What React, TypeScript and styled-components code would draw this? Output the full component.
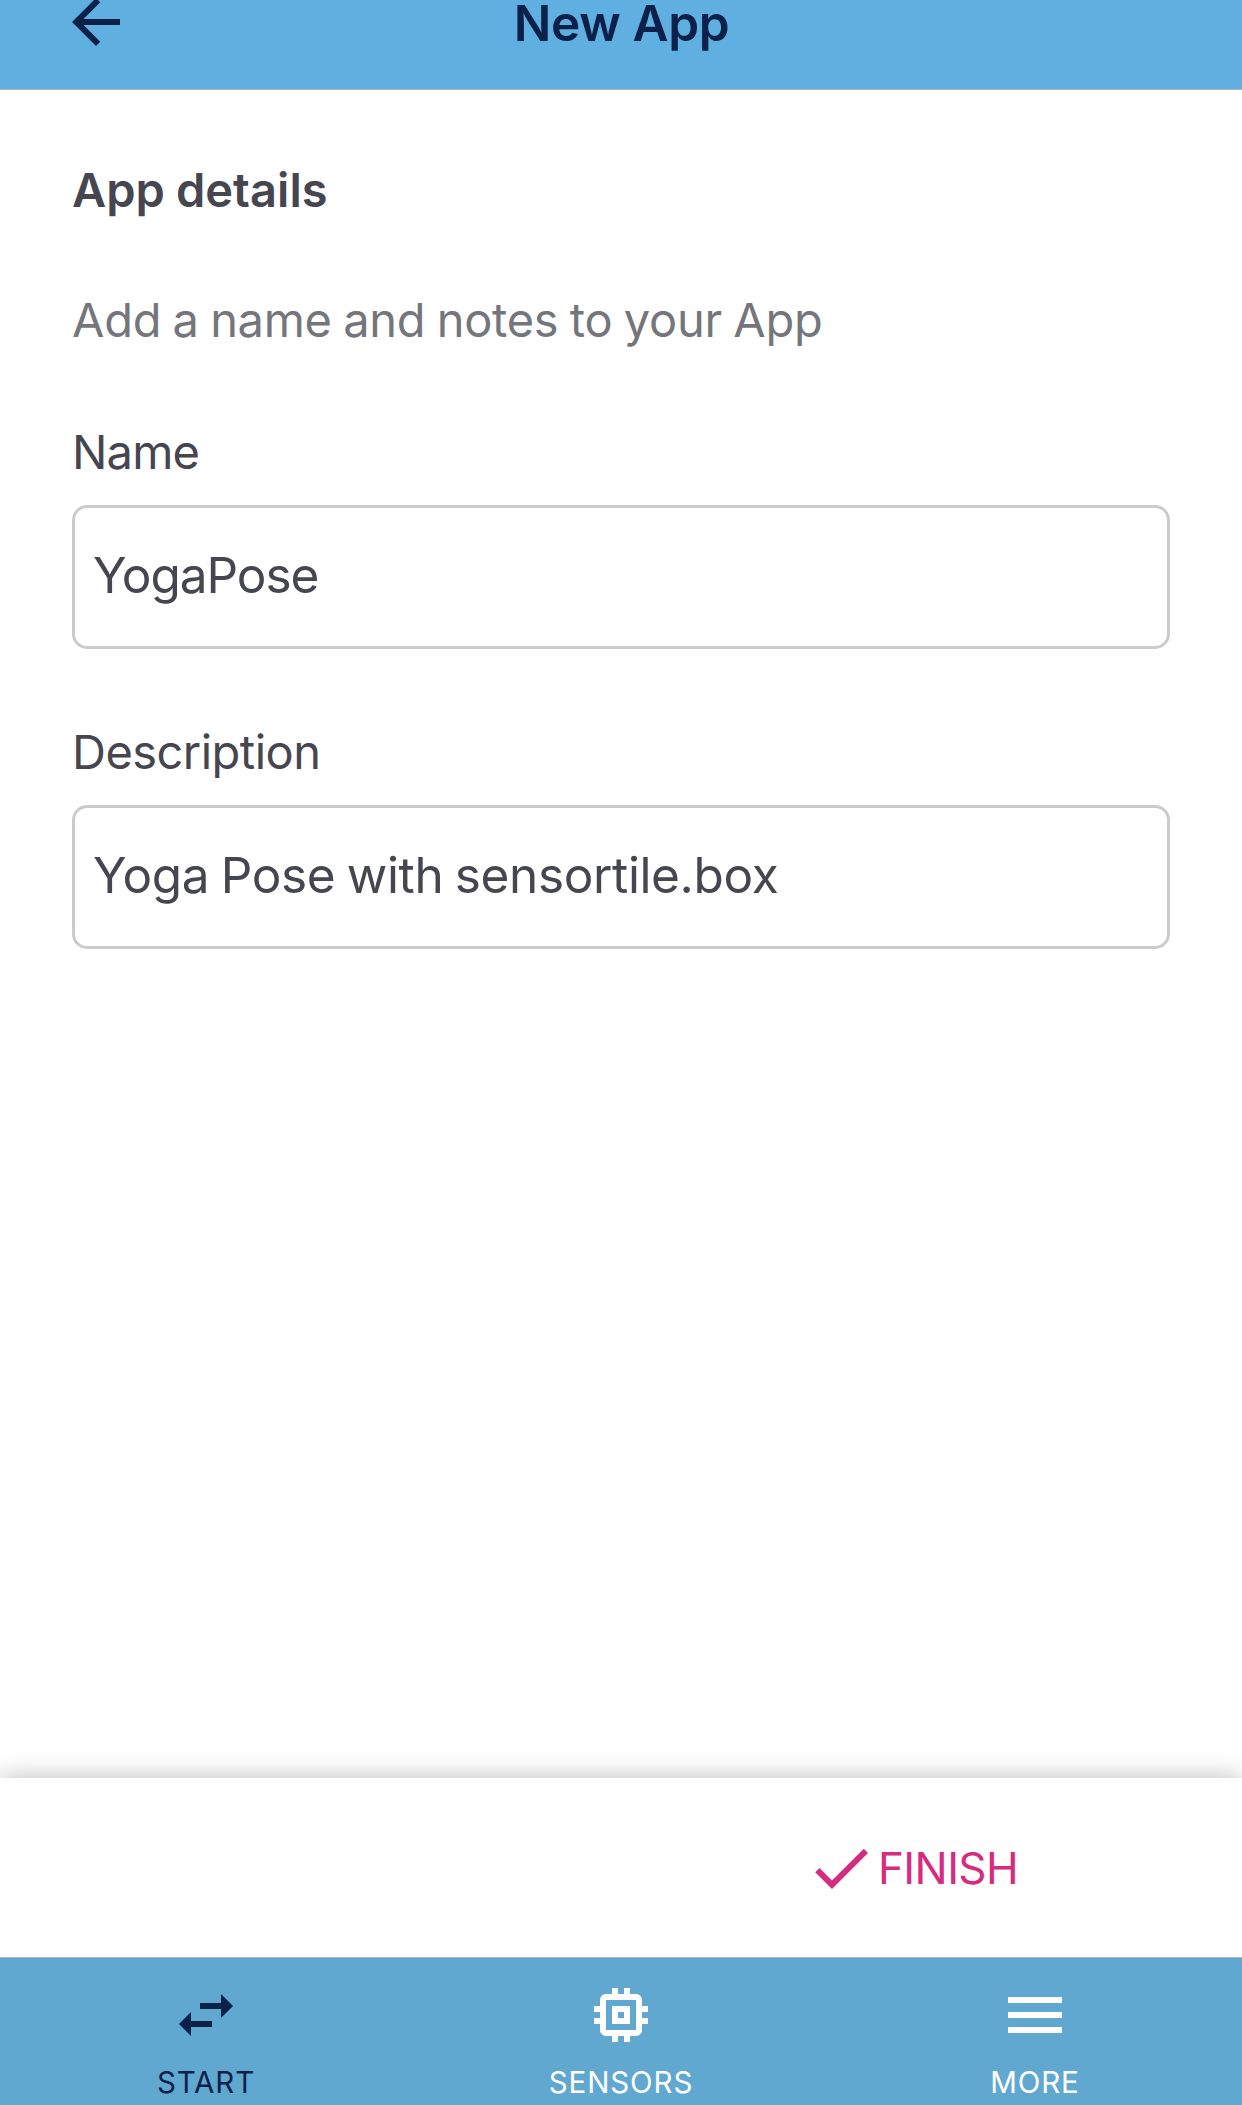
import React from "react";
import styled, { createGlobalStyle } from "styled-components";

const navy = "#0b2149";
const ink = "#464650";

const GlobalStyle = createGlobalStyle`
  *, *::before, *::after { box-sizing: border-box; }
  body {
    margin: 0;
    background: #fff;
    font-family: Inter, "Liberation Sans", sans-serif;
  }
`;

const Screen = styled.div`
  display: flex;
  flex-direction: column;
  width: 1242px;
  height: 2105px;
  overflow: hidden;
  background: #fff;
`;

const Header = styled.header`
  display: grid;
  grid-template-columns: 132px 1fr 132px;
  grid-template-rows: 46px;
  align-items: center;
  flex: none;
  height: 90px;
  background: #60afe1;
  border-bottom: 1px solid #b0b3b8;
`;

const BackButton = styled.button`
  display: flex;
  align-self: center;
  justify-self: end;
  margin: -14px 0 -12px;
  padding: 0;
  border: 0;
  background: none;
  color: ${navy};
`;

const Title = styled.h1`
  margin: 0;
  padding-left: 1px;
  text-align: center;
  font-size: 49.5px;
  font-weight: 600;
  line-height: 46px;
  letter-spacing: -0.33px;
  color: ${navy};
`;

const Icon = styled.svg`
  display: block;
  flex: none;
  width: 72px;
  height: 72px;
  fill: currentColor;
`;

const Content = styled.main`
  display: flex;
  flex-direction: column;
  flex: 1;
  padding: 71px 72px 0;
`;

const SectionTitle = styled.h2`
  margin: 0 0 72px;
  font-size: 47px;
  font-weight: 600;
  line-height: 58px;
  letter-spacing: 0.05px;
  word-spacing: -1px;
  color: ${ink};
`;

const Hint = styled.p`
  margin: 0 0 74px;
  font-size: 47px;
  line-height: 58px;
  letter-spacing: -0.28px;
  word-spacing: -1.5px;
  color: #75757c;
`;

const Field = styled.div`
  display: flex;
  flex-direction: column;
  gap: 24px;
  margin-bottom: 74px;
`;

const FieldLabel = styled.div<{ $tracking: number }>`
  font-size: 47px;
  line-height: 58px;
  letter-spacing: ${(p) => p.$tracking}px;
  color: ${ink};
`;

const FieldBox = styled.div<{ $tracking: number }>`
  display: flex;
  align-items: center;
  height: 144px;
  padding: 0 18px 4px;
  border: 3px solid #cbcbcb;
  border-radius: 15px;
  font-size: 49.5px;
  letter-spacing: ${(p) => p.$tracking}px;
  word-spacing: -2px;
  color: ${ink};
`;

const ActionBar = styled.footer`
  display: flex;
  align-items: center;
  justify-content: flex-end;
  flex: none;
  height: 179px;
  padding: 1px 224px 0 0;
  background: #fff;
  box-shadow: 0 0 24px rgba(0, 0, 0, 0.27);
`;

const FinishButton = styled.button`
  display: flex;
  align-items: center;
  gap: 1px;
  width: 213px;
  padding: 0;
  border: 0;
  background: none;
  font: 400 44px/54px Inter, "Liberation Sans", sans-serif;
  letter-spacing: -0.6px;
  color: #d62c7e;
`;

const TabBar = styled.nav`
  position: relative;
  display: grid;
  grid-template-columns: 412px 418px 410px;
  flex: none;
  height: 148px;
  padding-top: 21px;
  background: #61a8d1;
  border-top: 1px solid #adb1b5;
`;

const Tab = styled.div<{ $active?: boolean }>`
  display: flex;
  flex-direction: column;
  align-items: center;
  gap: 13px;
  color: ${(p) => (p.$active ? navy : "#fff")};
`;

const TabLabel = styled.span`
  font-size: 29.5px;
  line-height: 37px;
  letter-spacing: 0.88px;
`;

const paths = {
  back: "M20 11H7.83l5.59-5.59L12 4l-8 8 8 8 1.41-1.41L7.83 13H20v-2z",
  check: "M9 16.17L4.83 12l-1.42 1.41L9 19 21 7l-1.41-1.41z",
  swap: "M6.99 11L3 15l3.99 4v-3H14v-2H6.99v-3zM21 9l-3.99-4v3H10v2h7.01v3L21 9z",
  chip: "M15 9H9v6h6V9zm-2 4h-2v-2h2v2zm8-2V9h-2V7c0-1.1-.9-2-2-2h-2V3h-2v2h-2V3H9v2H7c-1.1 0-2 .9-2 2v2H3v2h2v2H3v2h2v2c0 1.1.9 2 2 2h2v2h2v-2h2v2h2v-2h2c1.1 0 2-.9 2-2v-2h2v-2h-2v-2h2zm-4 6H7V7h10v10z",
  menu: "M3 18h18v-2H3v2zm0-5h18v-2H3v2zm0-7v2h18V6H3z",
};

function Glyph({ name }: { name: keyof typeof paths }) {
  return (
    <Icon viewBox="0 0 24 24" aria-hidden="true">
      <path d={paths[name]} />
    </Icon>
  );
}

const fields = [
  { label: "Name", labelTracking: -0.8, value: "YogaPose", valueTracking: -1.03 },
  {
    label: "Description",
    labelTracking: -0.53,
    value: "Yoga Pose with sensortile.box",
    valueTracking: -0.37,
  },
];

const tabs: { label: string; icon: keyof typeof paths; active?: boolean }[] = [
  { label: "START", icon: "swap", active: true },
  { label: "SENSORS", icon: "chip" },
  { label: "MORE", icon: "menu" },
];

export default function App() {
  return (
    <Screen>
      <GlobalStyle />
      <Header>
        <BackButton aria-label="Back">
          <Glyph name="back" />
        </BackButton>
        <Title>New App</Title>
      </Header>
      <Content>
        <SectionTitle>App details</SectionTitle>
        <Hint>Add a name and notes to your App</Hint>
        {fields.map((f) => (
          <Field key={f.label}>
            <FieldLabel $tracking={f.labelTracking}>{f.label}</FieldLabel>
            <FieldBox $tracking={f.valueTracking}>{f.value}</FieldBox>
          </Field>
        ))}
      </Content>
      <ActionBar>
        <FinishButton>
          <Glyph name="check" />
          FINISH
        </FinishButton>
      </ActionBar>
      <TabBar>
        {tabs.map((t) => (
          <Tab key={t.label} $active={t.active}>
            <Glyph name={t.icon} />
            <TabLabel>{t.label}</TabLabel>
          </Tab>
        ))}
      </TabBar>
    </Screen>
  );
}
